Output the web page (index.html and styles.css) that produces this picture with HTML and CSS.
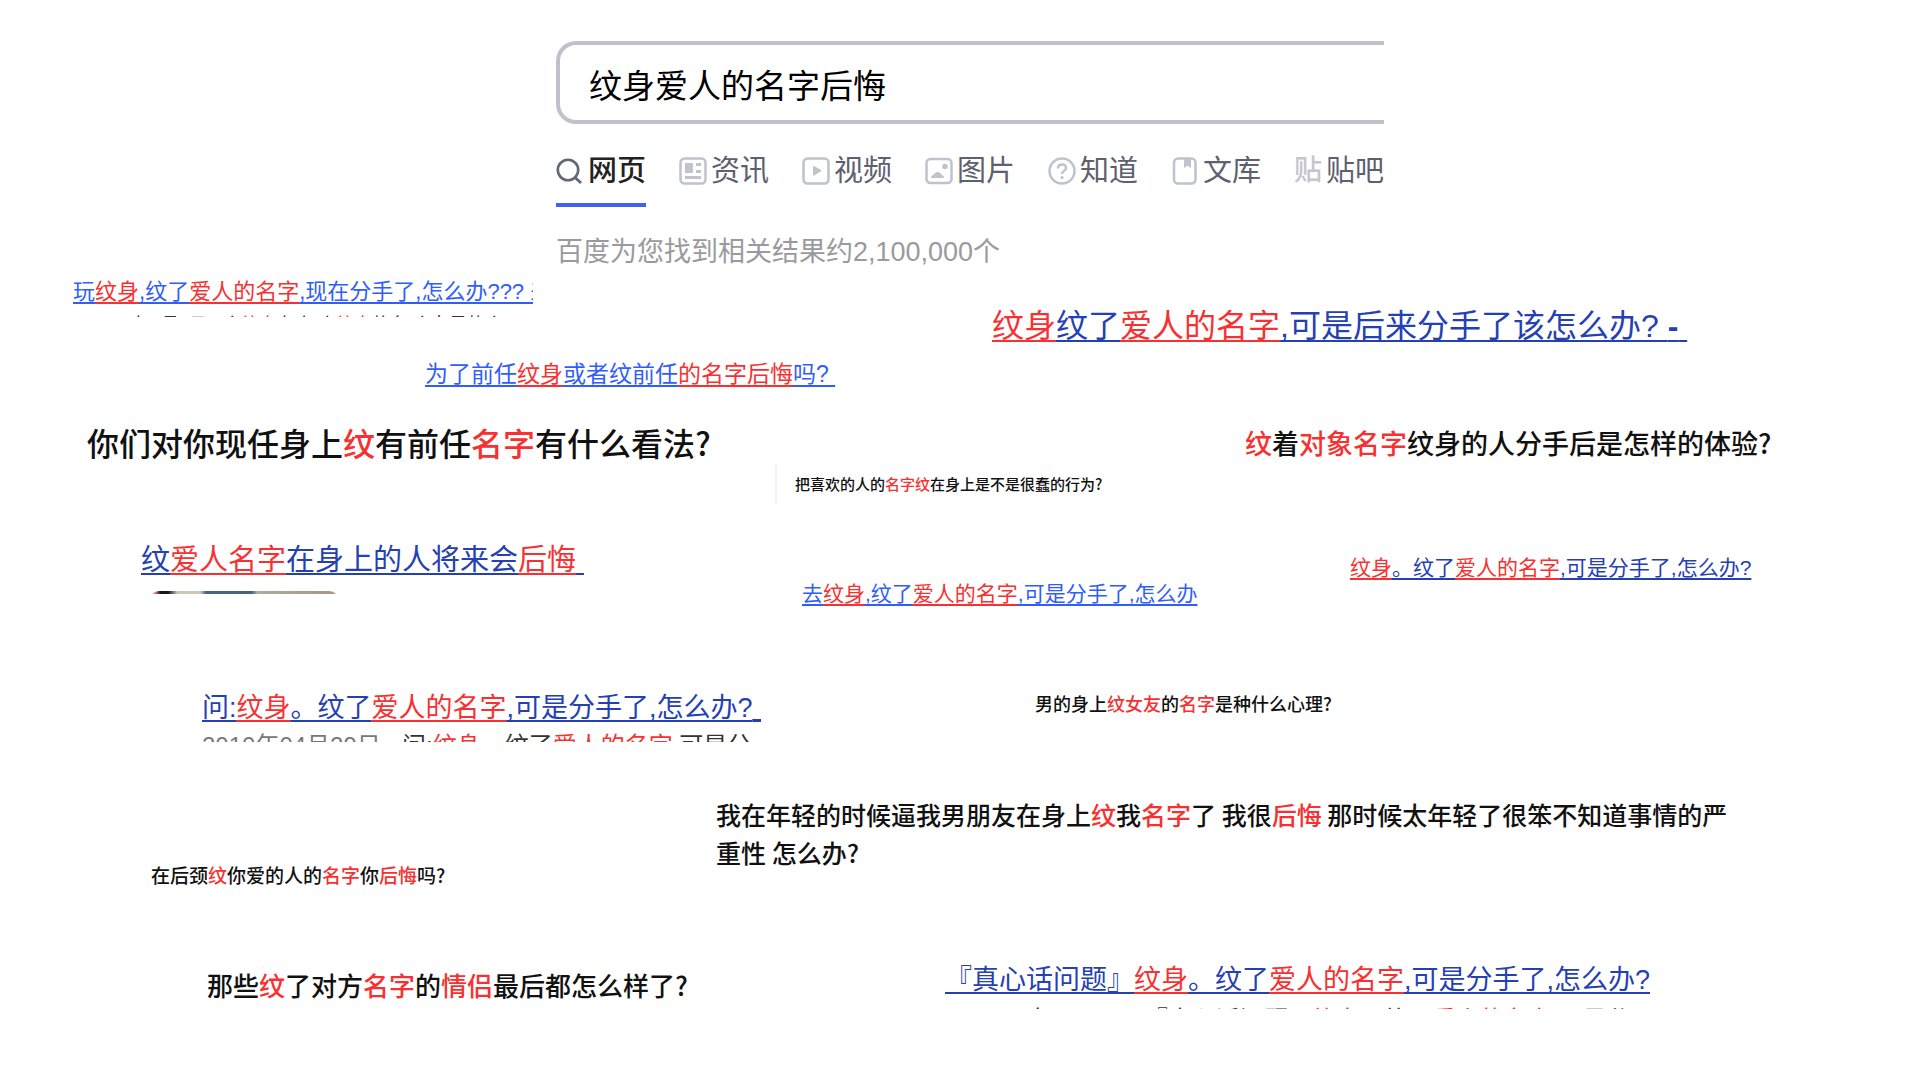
FILE: index.html
```
<!DOCTYPE html>
<html lang="zh-CN">
<head>
<meta charset="utf-8">
<title>纹身爱人的名字后悔</title>
<link rel="stylesheet" href="styles.css">
</head>
<body>
<main class="board">
  <header class="search">
    <form class="search-form" role="search">
      <input class="search-box" type="text" aria-label="搜索" value="纹身爱人的名字后悔">
    </form>
    <nav class="tabs">
      <a class="tab active" href="#"><svg class="icon" viewBox="0 0 28 28"><circle cx="12" cy="13" r="10.2" fill="none" stroke="#626675" stroke-width="2.6"/><path d="M19 20.500l6 5.500" fill="none" stroke="#626675" stroke-width="2.800"/></svg>网页</a>
      <a class="tab" href="#"><svg class="icon" viewBox="0 0 28 28"><rect x="1.500" y="1.500" width="25" height="25" rx="4" class="line"/><path class="fill" d="M6 6h8v10H6zM17 6h5v3h-5zM17 13h5v3h-5zM6 19h16v3H6z"/></svg>资讯</a>
      <a class="tab" href="#"><svg class="icon" viewBox="0 0 28 28"><rect x="1.500" y="1.500" width="25" height="25" rx="4" class="line"/><path class="fill" d="M11 9.500q0-1 1-.6l7 4q1 .7 0 1.400l-7 4.300q-1 .4-1-.6z"/></svg>视频</a>
      <a class="tab" href="#"><svg class="icon" viewBox="0 0 28 28"><rect x="1.500" y="2" width="25" height="24" rx="4" class="line"/><circle cx="20" cy="9.500" r="2.800" class="fill"/><path class="fill" d="M6 21q0-2 2-3l3-2.500q2-1.200 4 .5l2 2q2 .5 2 3z"/></svg>图片</a>
      <a class="tab" href="#"><svg class="icon" viewBox="0 0 28 28"><circle cx="14" cy="14" r="12.500" class="line"/><path class="line" d="M10 11.500q0-4 4-4t4 3.500q0 2-2 3t-2 3"/><circle cx="14" cy="20.500" r="1.600" class="fill"/></svg>知道</a>
      <a class="tab" href="#"><svg class="icon" viewBox="0 0 28 28"><rect x="3" y="1.500" width="21.500" height="25" rx="4" class="line"/><path class="fill" d="M13 2h7v9l-3.500-2.500L13 11z"/></svg>文库</a>
      <a class="tab" href="#"><span class="icon glyph" aria-hidden="true">贴</span>贴吧</a>
    </nav>
    <p class="count">百度为您找到相关结果约2,100,000个</p>
  </header>

  <section class="clip now-what cropped">
    <a class="link light" href="#">玩<em>纹身</em>,纹了<em>爱人的名字</em>,现在分手了,怎么办??? 来</a>
    <p class="snippet">2018年8月8日 - 个<em>纹身</em>在小,个<em>纹身</em>的名,个女是的个</p>
  </section>
  <section class="clip later"><a class="link" href="#"><em>纹身</em>纹了<em>爱人的名字</em>,可是后来分手了该怎么办? <b>-</b>&nbsp;</a></section>
  <section class="clip ex"><a class="link light" href="#">为了前任<em>纹身</em>或者纹前任<em>的名字后悔</em>吗?&nbsp;</a></section>
  <h2 class="clip title opinion">你们对你现任身上<em>纹</em>有前任<em>名字</em>有什么看法?</h2>
  <h2 class="clip title breakup"><em>纹</em>着<em>对象名字</em>纹身的人分手后是怎样的体验?</h2>
  <h2 class="clip title silly">把喜欢的人的<em>名字纹</em>在身上是不是很蠢的行为?</h2>
  <section class="clip future cropped">
    <a class="link" href="#">纹<em>爱人名字</em>在身上的人将来会<em>后悔</em>&nbsp;</a>
    <div class="thumb"></div>
  </section>
  <section class="clip gone"><a class="link light" href="#">去<em>纹身</em>,纹了<em>爱人的名字</em>,可是分手了,怎么办</a></section>
  <section class="clip stop"><a class="link" href="#"><em>纹身</em>。纹了<em>爱人的名字</em>,可是分手了,怎么办?</a></section>
  <section class="clip ask cropped">
    <a class="link" href="#">问:<em>纹身</em>。纹了<em>爱人的名字</em>,可是分手了,怎么办?<b>_</b></a>
    <p class="snippet"><time>2010年04月29日</time>问:<em>纹身</em>。纹了<em>爱人的名字</em>,可是分</p>
  </section>
  <h2 class="clip title mind">男的身上<em>纹女友</em>的<em>名字</em>是种什么心理?</h2>
  <h2 class="clip title young">我在年轻的时候逼我男朋友在身上<em>纹</em>我<em>名字</em>了 我很<em>后悔</em> 那时候太年轻了很笨不知道事情的严<br>重性 怎么办?</h2>
  <h2 class="clip title neck">在后颈<em>纹</em>你爱的人的<em>名字</em>你<em>后悔</em>吗?</h2>
  <h2 class="clip title couples">那些<em>纹</em>了对方<em>名字</em>的<em>情侣</em>最后都怎么样了?</h2>
  <section class="clip truth cropped">
    <a class="link" href="#">『真心话问题』<em>纹身</em>。纹了<em>爱人的名字</em>,可是分手了,怎么办?</a>
    <p class="snippet">2010年8月8日 -『真心话问题』<em>纹身</em>。纹了<em>爱人的名字</em>,可是分</p>
  </section>
</main>
</body>
</html>
```

FILE: styles.css
```
* { box-sizing: border-box; }

body {
  margin: 0;
  background: #fff;
  color: #111;
  font-family: "Liberation Sans", "Noto Sans CJK SC", sans-serif;
}

em { font-style: normal; color: #f73131; }
h2, p { margin: 0; }

.board {
  position: relative;
  min-height: 100vh;
  overflow: hidden;
}

/* search header */
.search {
  width: fit-content;
  margin-left: 556px;
  padding-top: 41px;
}

.search-form { display: flex; }

.search-box {
  flex: 1;
  min-width: 0;
  height: 83px;
  padding: 2px 0 0 29px;
  border: 4px solid #c0c1cc;
  border-right: 0;
  border-radius: 20px 0 0 20px;
  background: #fff;
  color: #000;
  font: 33px "Liberation Sans", "Noto Sans CJK SC", sans-serif;
  outline: 0;
}

.tabs {
  display: flex;
  gap: 33px;
  margin-top: 27px;
}

.tab {
  display: flex;
  align-items: center;
  gap: 4px;
  padding-bottom: 12px;
  border-bottom: 4px solid transparent;
  color: #5d606e;
  font-size: 29px;
  line-height: 40px;
  text-decoration: none;
}

.tab.active { color: #222; border-color: #4160f0; font-weight: 500; }

.icon { flex: none; width: 28px; height: 28px; }
.line { fill: none; stroke: #c0c2cd; stroke-width: 2.5; }
.fill { fill: #c0c2cd; }
.glyph { color: #c3c5ce; font-size: 28px; line-height: 28px; font-weight: 500; }

.count {
  margin-top: 25px;
  color: #9a9a9e;
  font-size: 27px;
  line-height: 40px;
}

/* clippings pinned on the board */
.clip {
  position: absolute;
  white-space: nowrap;
  line-height: 40px;
}

.cropped { overflow: hidden; }

.link {
  display: block;
  color: #2440b3;
  text-decoration: underline;
  text-decoration-thickness: 2px;
  text-underline-offset: 3px;
  text-decoration-skip-ink: none;
}

.link em {
  text-decoration: inherit;
  text-decoration-color: #f73131;
}

.light { color: #315efb; }

.title {
  font-family: "Noto Sans CJK SC", sans-serif;
  font-weight: 500;
}

.snippet { color: #333; }
.snippet time { display: inline-block; width: 200px; color: #777; }

.now-what { left: 73px; top: 272px; width: 460px; height: 45px; font-size: 22px; }
.now-what .snippet { padding-left: 20px; font-size: 18px; line-height: 26px; }

.later { left: 992px; top: 306px; font-size: 32px; }
.ex { left: 425px; top: 354px; font-size: 23px; }
.opinion { left: 87px; top: 422px; font-size: 32px; }
.breakup { left: 1245px; top: 423px; font-size: 27px; }

.silly {
  left: 775px;
  top: 464px;
  padding-left: 18px;
  border-left: 2px solid #f2f2f2;
  font-size: 15px;
}

.future { left: 141px; top: 540px; height: 54px; font-size: 29px; }

.thumb {
  width: 190px;
  height: 20px;
  margin: 11px 8px 0;
  border-radius: 12px;
  background: linear-gradient(90deg, #e58aa8 0 3%, #161616 6% 10%, #cfc6bb 15% 27%, #48627f 30% 54%, #b0aaa0 57%, #a39689);
}

.gone { left: 802px; top: 574px; font-size: 21px; }
.stop { left: 1350px; top: 548px; font-size: 21px; }

.ask { left: 202px; top: 688px; width: 559px; height: 54px; font-size: 27px; }
.ask .snippet { font-size: 24px; line-height: 36px; }

.mind { left: 1035px; top: 683px; font-size: 18px; }
.young { left: 716px; top: 795px; font-size: 25px; line-height: 38px; }
.neck { left: 151px; top: 855px; font-size: 19px; }
.couples { left: 207px; top: 965px; font-size: 26px; }

.truth { left: 945px; top: 960px; width: 709px; height: 49px; font-size: 27px; }
.truth .snippet { padding-left: 32px; font-size: 24px; line-height: 40px; }
```
